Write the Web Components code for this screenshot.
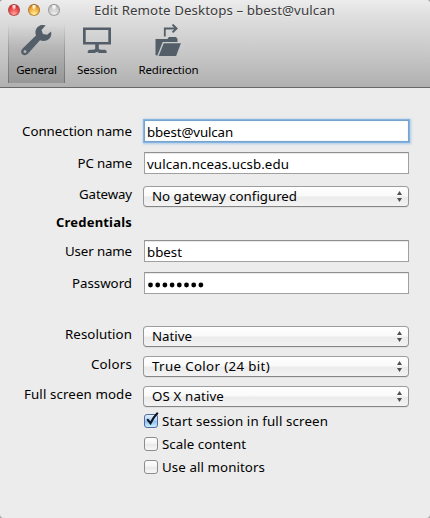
<!DOCTYPE html>
<html lang="en">
<head>
<meta charset="utf-8">
<title>Edit Remote Desktops</title>
<style>
html,body{margin:0;height:100%;overflow:hidden;background:#a4a4a4}
body{font:13.3px/20px "Noto Sans","Open Sans",sans-serif;color:#000}
</style>
</head>
<body>
<prefs-window></prefs-window>
<script>
function define(name, html, setup) {
  const t = document.createElement('template');
  t.innerHTML = html;
  customElements.define(name, class extends HTMLElement {
    constructor() {
      super();
      this.attachShadow({mode: 'open'}).append(t.content.cloneNode(true));
    }
    connectedCallback() { if (setup) setup(this, this.shadowRoot); }
  });
}

// One line of text, tracked so that it spans the width given in "w".
define('fit-text', `<style>
:host{display:inline-block;white-space:nowrap;text-align:left}
span{display:inline-block}
</style><span><slot></slot></span>`, (el, root) => {
  const w = parseFloat(el.getAttribute('w'));
  const s = root.querySelector('span');
  const n = el.textContent.length;
  const gap = (w - s.getBoundingClientRect().width) / n;
  s.style.letterSpacing = gap.toFixed(3) + 'px';
});

define('traffic-lights', `<style>
:host{display:flex;gap:8px}
i{box-sizing:border-box;width:12px;height:12px;border-radius:50%;border:1px solid}
.r{border-color:#9d3b3b #b54848 #c05050;background:radial-gradient(ellipse at 50% 12%,#fff 0,#fbb 16%,transparent 34%),radial-gradient(circle at 50% 90%,#ffaaa5 0,#ee5555 45%,#cf2f34 80%)}
.y{border-color:#96652b #b17a34 #bd8b3d;background:radial-gradient(ellipse at 50% 12%,#fff 0,#ffe6b0 16%,transparent 34%),radial-gradient(circle at 50% 90%,#fff3a0 0,#f4b548 45%,#d98a26 80%)}
.g{border-color:#8b8b8b #999 #a0a0a0;background:radial-gradient(ellipse at 50% 12%,#fff 0,#eee 18%,transparent 36%),radial-gradient(circle at 50% 90%,#eee 0,#d0d0d0 50%,#b8b8b8 85%)}
</style><i class="r"></i><i class="y"></i><i class="g"></i>`);

define('title-bar', `<style>
:host{display:grid;grid-template-columns:94px 1fr;height:23px;color:#3b3b3b;text-shadow:0 1px 0 #ffffff80}
traffic-lights{padding:4px 0 0 8px}
</style><traffic-lights></traffic-lights><div><slot></slot></div>`);

define('tool-item', `<style>
:host{box-sizing:border-box;display:flex;flex-direction:column;align-items:center;height:59px;font-size:11.5px;line-height:16px;border:0 solid transparent}
:host([selected]){background:linear-gradient(#7770 0,#7774 45%,#7777 100%);border-width:0 1px;border-image:linear-gradient(#7770,#666b) 1}
.icon{height:38px;display:block}
</style><div class="icon"><slot name="icon"></slot></div><slot></slot>`);

define('tool-bar', `<style>
:host{display:grid;grid-template-columns:57px 64px 79px;padding:1px 0 0 8px}
svg{display:block}
</style>
<tool-item selected>
<svg slot="icon" width="40" height="38" viewBox="16.5 24 40 38"><path fill="#535e69" fill-rule="evenodd" d="M45.2 25.3 41.5 25.1C37.3 25.7 34.6 29 35 33.4L35.5 35.5 22.1 48.5C20.1 50.5 20.3 53.1 21.8 54.3 23.4 55.7 25.9 55.3 27.4 53.7L39.5 40.3C41.5 41.1 44.4 41.3 46.6 40.2 50 38.8 51.5 35.3 50.5 31.5L46.6 34.8 42.4 34.1 41 30.1ZM23 51.4A1.5 1.5 0 1 0 26 51.4A1.5 1.5 0 1 0 23 51.4Z"/></svg>
<fit-text w="40.5">General</fit-text></tool-item>
<tool-item>
<svg slot="icon" width="40" height="38" viewBox="77 24 40 38"><path fill="#535e69" fill-rule="evenodd" d="M83 27.5H111V44.5H83ZM85.7 30V42H108.3V30ZM95.2 44.5H98.8V48.8Q99 49.6 101.5 49.7H105Q106.7 50 106.7 51.7V53H99Q98 52 97 52 96 52 95 53H87.7V51.7Q87.7 50 89.5 49.7H92.5Q95 49.6 95.2 48.8Z"/></svg>
<fit-text w="40">Session</fit-text></tool-item>
<tool-item>
<svg slot="icon" width="40" height="38" viewBox="148.5 24 40 38"><path fill="none" stroke="#535e69" stroke-width="1.8" d="M164.3 36.5V28.5H175"/><path fill="none" stroke="#535e69" stroke-width="2" d="M172 24.6 176 28.5 172 32.4"/><path fill="#535e69" d="M155 55V39H167L168.3 37H175.5L177 39V42H162.2L156.8 55.8ZM163.2 43.2H180.4L175.6 56H158.2Z"/></svg>
<fit-text w="60">Redirection</fit-text></tool-item>`);

define('window-header', `<style>
:host{box-sizing:border-box;display:block;height:88px;border-bottom:1px solid #686868;border-radius:4px 4px 0 0;background:linear-gradient(#ececec 0,#dedede 20%,#c8c8c8 60%,#b0b0b0 100%)}
</style><slot></slot>`);

define('form-row', `<style>
:host{display:grid;grid-template-columns:132px 266px;column-gap:11px;align-items:start;height:var(--h,32px)}
.label{text-align:right;margin-top:var(--drop,1px)}
</style><div class="label"><slot name="label"></slot></div><slot></slot>`);

define('text-field', `<style>
:host{box-sizing:border-box;display:block;height:22px;margin-left:1px;padding:1px 0 0 2px;background:#fff;border:1px solid #a0a0a0;border-top-color:#909090;box-shadow:inset 0 1px 0 #e8e8e8}
:host([focused]){border-color:#78a3cd;box-shadow:0 0 0 1px #7badddcc,0 0 2px 1.5px #7fb2e499,inset 0 0 1px #a9cceb}
:host([secret]){display:flex;gap:2px;align-items:center;padding:4px 0 0 2px}
</style><slot></slot>`);

define('pop-up', `<style>
:host{box-sizing:border-box;display:flex;justify-content:space-between;height:21px;padding:0 6px 0 8px;line-height:19px;border:1px solid #969696;border-top-color:#9d9d9d;border-bottom-color:#858585;border-radius:4px;background:linear-gradient(#fff 0,#f9f9f9 48%,#ebebeb 52%,#f3f3f3 100%);box-shadow:0 1px 0 #0000000d}
svg{margin-top:4px}
</style><slot></slot><svg width="5" height="12" viewBox="0 0 5 12"><path fill="#505050" d="M0 4 2.5 0 5 4ZM0 7H5L2.5 11Z"/></svg>`);

define('check-box', `<style>
:host{display:flex;gap:4px;height:23px;margin-left:144px}
i{box-sizing:border-box;width:14px;height:14px;border:1px solid #8c8c8c;border-radius:3px;background:linear-gradient(#fff,#f4f4f4 45%,#e9e9e9 55%,#f8f8f8)}
svg{display:none;overflow:visible;margin:-1px}
:host([checked]) i{border-color:#526b9c;background:linear-gradient(#e2f0fc,#b0d3f5 45%,#8fc0ee 52%,#c9f0ff)}
:host([checked]) svg{display:block}
div{margin-top:-3px}
</style><i><svg width="14" height="14"><path fill="none" stroke="#0c1527" stroke-width="2.1" d="M3.2 5.2 6.5 9.2Q9.4 3.2 13.8-1.2"/></svg></i><div><slot></slot></div>`);

const dots = '<svg width="58" height="8">' +
  Array.from({length: 8}, (_, i) => `<circle cx="${3.5 + i * 7.2}" cy="4" r="2.4"/>`).join('') + '</svg>';

define('prefs-window', `<style>
:host{display:block;width:430px;height:518px;background:#ececec;border-radius:4px}
main{padding-top:32px}
b{font-weight:700;font-size:13px}
.pop{--drop:-2px}
svg{display:block}
</style>
<window-header>
<title-bar><fit-text w="241">Edit Remote Desktops – bbest@vulcan</fit-text></title-bar>
<tool-bar></tool-bar>
</window-header>
<main>
<form-row><fit-text slot="label" w="110">Connection name</fit-text><text-field focused><fit-text w="86">bbest@vulcan</fit-text></text-field></form-row>
<form-row style="--h:34px"><fit-text slot="label" w="54.5">PC name</fit-text><text-field><fit-text w="142">vulcan.nceas.ucsb.edu</fit-text></text-field></form-row>
<form-row class="pop" style="--h:29px"><fit-text slot="label" w="53">Gateway</fit-text><pop-up><fit-text w="145">No gateway configured</fit-text></pop-up></form-row>
<form-row style="--h:25px;--drop:-3px"><b slot="label"><fit-text w="76">Credentials</fit-text></b></form-row>
<form-row><fit-text slot="label" w="67">User name</fit-text><text-field><fit-text w="35">bbest</fit-text></text-field></form-row>
<form-row style="--h:54px"><fit-text slot="label" w="60">Password</fit-text><text-field secret>${dots}</text-field></form-row>
<form-row class="pop" style="--h:30px"><fit-text slot="label" w="67">Resolution</fit-text><pop-up><fit-text w="40">Native</fit-text></pop-up></form-row>
<form-row class="pop" style="--h:30px"><fit-text slot="label" w="41">Colors</fit-text><pop-up><fit-text w="118">True Color (24 bit)</fit-text></pop-up></form-row>
<form-row class="pop" style="--h:28px"><fit-text slot="label" w="108">Full screen mode</fit-text><pop-up><fit-text w="72">OS X native</fit-text></pop-up></form-row>
<check-box checked><fit-text w="166">Start session in full screen</fit-text></check-box>
<check-box><fit-text w="84">Scale content</fit-text></check-box>
<check-box><fit-text w="103">Use all monitors</fit-text></check-box>
</main>`);
</script>
</body>
</html>
